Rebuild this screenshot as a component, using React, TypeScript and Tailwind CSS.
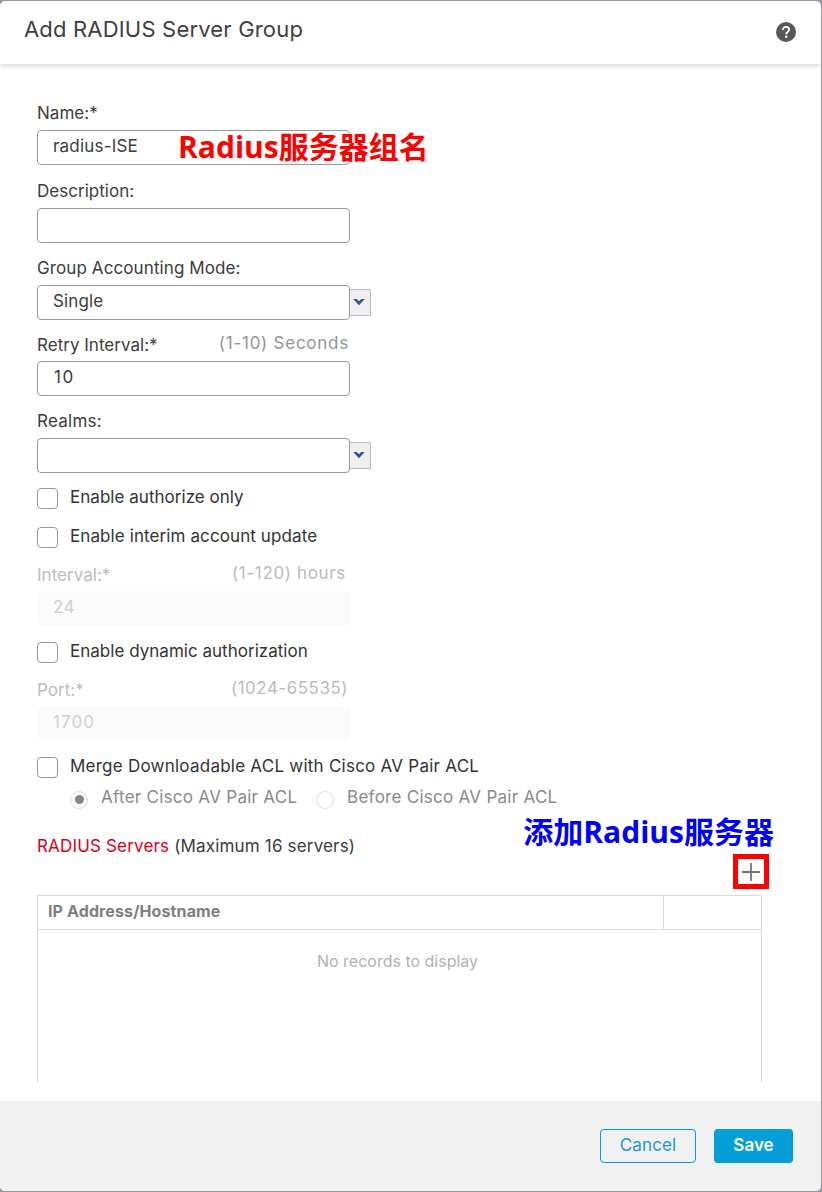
import type { ReactNode } from "react";

function Field({
  label,
  hint,
  value,
  disabled = false,
  select = false,
  labelClass = "tracking-[0.02px]",
  hintClass = "",
  valueClass = "tracking-[0.15px]",
}: {
  label: string;
  hint?: string;
  value?: string;
  disabled?: boolean;
  select?: boolean;
  labelClass?: string;
  hintClass?: string;
  valueClass?: string;
}) {
  return (
    <div>
      <div className={`flex h-[34px] w-[313px] items-center justify-between ${hint ? "pt-[2px]" : ""}`}>
        <label className={`${disabled ? "text-[#bdbdbd]" : "text-[#3c3c3c]"} ${labelClass}`}>{label}</label>
        {hint && (
          <span className={`mb-1 ${disabled ? "text-[#bcbcbc]" : "text-[#959595]"} ${hintClass}`}>{hint}</span>
        )}
      </div>
      <div className="flex">
        <div
          className={`flex h-[35px] w-[313px] items-center rounded-[4px] border pb-[3px] pl-[15px] ${
            disabled ? "border-[#fbfbfb] bg-[#fbfbfb] text-[#d0d0d0]" : "border-[#9a9a9e] bg-white text-[#3c3c3c]"
          }`}
        >
          <span className={valueClass}>{value}</span>
        </div>
        {select && (
          <div className="mt-1 flex h-[27px] w-[21px] items-center justify-center rounded-tr-[2px] border border-l-0 border-[#b5b8cf] bg-[#efefef]">
            <svg width="12" height="8" viewBox="0 0 12 8" className="mr-[2px] mb-px">
              <path d="M0.300 1h3.400L6 3.200 8.300 1h3.400L6 7.200z" fill="#35538f" />
            </svg>
          </div>
        )}
      </div>
    </div>
  );
}

function Check({ children, className = "" }: { children: ReactNode; className?: string }) {
  return (
    <div className="flex h-[39px] items-center">
      <span className="h-[21px] w-[21px] rounded-[4px] border border-[#98989c] bg-white" />
      <span className={`mb-[3px] ml-3 text-[#333] ${className}`}>{children}</span>
    </div>
  );
}

function Radio({ checked = false }: { checked?: boolean }) {
  return (
    <span className="mt-[3px] flex h-[18px] w-[18px] shrink-0 items-center justify-center rounded-full border border-[#dcdcdc]">
      {checked && <span className="h-[9px] w-[9px] rounded-full bg-[#858585]" />}
    </span>
  );
}

export default function App() {
  return (
    <div className="h-[1192px] w-[822px] overflow-hidden bg-[#98989c] pt-px pr-px pb-px font-['Inter','Noto_Sans_CJK_SC',sans-serif] text-[17px] leading-5 whitespace-nowrap">
      <div className="flex h-[1190px] flex-col overflow-hidden rounded-[5px] bg-white">
        <header className="z-10 flex h-[63px] shrink-0 justify-between pr-[25px] pl-[24px] shadow-[0_2px_5px_rgba(0,0,0,0.17)]">
          <h1 className="mt-[14px] text-[22px] leading-7 tracking-[0.18px] text-[#3f3f41]">Add RADIUS Server Group</h1>
          <svg width="20" height="20" viewBox="0 0 20 20" className="mt-[21px]">
            <circle cx="10" cy="10" r="10" fill="#58585b" />
            <path d="M6.900 8C6.900 6 8.200 4.900 10 4.900s3.100 1.100 3.100 2.700c0 2.100-2.900 2.200-2.900 4.700" fill="none" stroke="#fff" strokeWidth="1.900" />
            <rect x="9.100" y="13.600" width="2.200" height="2.200" fill="#fff" />
          </svg>
        </header>

        <main className="flex h-[1037px] shrink-0 flex-col pt-8 pl-[37px]">
          <div className="relative">
            <Field label="Name:*" value="radius-ISE" valueClass="tracking-[0.2px]" />
            <span className="absolute top-[33px] left-[141px] font-['Open_Sans','Noto_Sans_CJK_SC',sans-serif] text-[30px] leading-9 font-bold text-[#ff0000]">
              Radius服务器组名
            </span>
          </div>
          <div className="mt-[9px]">
            <Field label="Description:" />
          </div>
          <div className="mt-2">
            <Field label="Group Accounting Mode:" labelClass="tracking-[0.1px]" value="Single" select />
          </div>
          <div className="mt-[7px]">
            <Field
              label="Retry Interval:*"
              hint="(1-10) Seconds"
              hintClass="mr-[1px] tracking-[0.75px]"
              value="10"
              valueClass="pl-[1px] tracking-[1.5px]"
            />
          </div>
          <div className="mt-2">
            <Field label="Realms:" labelClass="tracking-[0.25px]" select />
          </div>
          <div className="mt-[6px]">
            <Check className="tracking-[0.03px]">Enable authorize only</Check>
            <Check className="tracking-[0.1px]">Enable interim account update</Check>
          </div>
          <Field
            label="Interval:*"
            hint="(1-120) hours"
            hintClass="mr-[4px] tracking-[0.65px]"
            value="24"
            valueClass="tracking-[0.5px]"
            disabled
          />
          <div className="mt-[7px]">
            <Check className="tracking-[0.02px]">Enable dynamic authorization</Check>
          </div>
          <Field
            label="Port:*"
            hint="(1024-65535)"
            hintClass="mr-[2px] tracking-[0.5px]"
            value="1700"
            valueClass="tracking-[1.1px]"
            disabled
          />
          <div className="mt-[7px]">
            <Check className="tracking-[0.24px]">Merge Downloadable ACL with Cisco AV Pair ACL</Check>
          </div>
          <div className="-mt-px mb-px flex h-6 items-center pl-[33px] tracking-[0.27px] text-[#8a8a8a]">
            <Radio checked />
            <span className="mb-[3px] ml-[13px] w-[215px]">After Cisco AV Pair ACL</span>
            <Radio />
            <span className="mb-[3px] ml-[13px]">Before Cisco AV Pair ACL</span>
          </div>
          <div className="mt-1 flex h-[39px] justify-between pr-[47px]">
            <div className="mt-[21px] tracking-[0.17px] text-[#3c3c3c]">
              <span className="text-[#d9001b]">RADIUS Servers</span> <span>(Maximum 16 servers)</span>
            </div>
            <span className="-mt-px font-['Open_Sans','Noto_Sans_CJK_SC',sans-serif] text-[30px] leading-9 font-bold text-[#0000ff]">
              添加Radius服务器
            </span>
          </div>
          <div className="flex h-[35px] justify-end pr-[52px]">
            <button className="flex h-[35px] w-[36px] items-center justify-center border-[5px] border-[#ff0000]">
              <svg width="18" height="18" viewBox="0 0 18 18">
                <path d="M9 0v18M0 9h18" stroke="#747474" strokeWidth="1.800" />
              </svg>
            </button>
          </div>
          <div className="mt-[6px] flex h-[187px] w-[725px] flex-col border border-b-0 border-[#dadada] text-[16px]">
            <div className="flex h-[34px] border-b border-[#dadada]">
              <div className="w-[626px] border-r border-[#dadada] pt-[5px] pl-[10px] font-bold tracking-[0.12px] text-[#7f7f82]">
                IP Address/Hostname
              </div>
            </div>
            <div className="mt-[21px] w-[719px] text-center text-[#b2b2b2]">No records to display</div>
          </div>
        </main>

        <footer className="flex flex-1 justify-end gap-[18px] bg-[#f1f1f1] pt-7 pr-7">
          <button className="flex h-[34px] w-[96px] items-center justify-center rounded-[4px] border border-[#049fd9] pb-[3px] tracking-[0.15px] text-[#189bd3]">
            Cancel
          </button>
          <button className="flex h-[34px] w-[79px] items-center justify-center rounded-[4px] bg-[#049fd9] pb-[3px] font-semibold text-white">
            Save
          </button>
        </footer>
      </div>
    </div>
  );
}
